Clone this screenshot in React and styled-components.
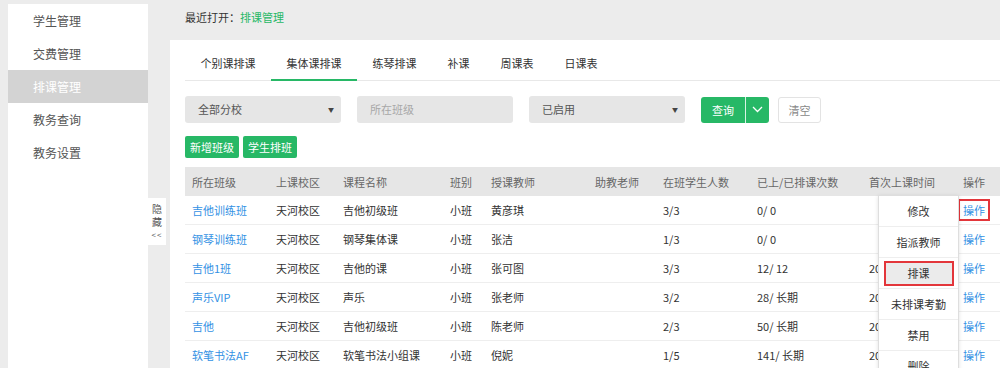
import React from "react";
import { styled, createGlobalStyle } from "styled-components";

const green = "#27b866";
const blue = "#3391e4";

const GlobalStyle = createGlobalStyle`
  html, body {
    margin: 0;
    padding: 0;
    background: #ececec;
    font-family: "Noto Sans CJK SC", "Noto Sans", sans-serif;
  }
`;

const menuItems = ["学生管理", "交费管理", "排课管理", "教务查询", "教务设置"];
const tabs = ["个别课排课", "集体课排课", "练琴排课", "补课", "周课表", "日课表"];
const columns = [
  { title: "所在班级", width: 84 },
  { title: "上课校区", width: 67 },
  { title: "课程名称", width: 107 },
  { title: "班别", width: 41 },
  { title: "授课教师", width: 104 },
  { title: "助教老师", width: 68 },
  { title: "在班学生人数", width: 94 },
  { title: "已上/已排课次数", width: 112 },
  { title: "首次上课时间", width: 94 },
  { title: "操作", width: 59 },
];
const rows = [
  ["吉他训练班", "天河校区", "吉他初级班", "小班", "黄彦琪", "", "3/3", "0/ 0", ""],
  ["钢琴训练班", "天河校区", "钢琴集体课", "小班", "张洁", "", "1/3", "0/ 0", ""],
  ["吉他1班", "天河校区", "吉他的课", "小班", "张可图", "", "3/3", "12/ 12", "2017-03-06"],
  ["声乐VIP", "天河校区", "声乐", "小班", "张老师", "", "3/2", "28/ 长期", "2017-02-20"],
  ["吉他", "天河校区", "吉他初级班", "小班", "陈老师", "", "2/3", "50/ 长期", "2016-11-14"],
  ["软笔书法AF", "天河校区", "软笔书法小组课", "小班", "倪妮", "", "1/5", "141/ 长期", "2016-09-03"],
];
const actions = ["修改", "指派教师", "排课", "未排课考勤", "禁用", "删除"];

const App = () => {
  return (
    <Page>
      <GlobalStyle />
      <Sidebar>
        {menuItems.map((m) => (
          <SideItem key={m} $active={m === "排课管理"}>
            {m}
          </SideItem>
        ))}
      </Sidebar>
      <HideTab>
        <span>隐</span>
        <span>藏</span>
        <span>&lt;&lt;</span>
      </HideTab>
      <Main>
        <Recent>
          最近打开：<RecentLink>排课管理</RecentLink>
        </Recent>
        <Panel>
          <TabBar>
            {tabs.map((t) => (
              <Tab key={t} $active={t === "集体课排课"}>
                {t}
              </Tab>
            ))}
          </TabBar>
          <Filters>
            <SelectBox>
              全部分校<Caret>▼</Caret>
            </SelectBox>
            <SelectBox $placeholder>所在班级</SelectBox>
            <SelectBox>
              已启用<Caret>▼</Caret>
            </SelectBox>
            <QueryGroup>
              <QueryMain>查询</QueryMain>
              <QueryArrow>
                <svg width="11" height="7" viewBox="0 0 11 7">
                  <path d="M1 1l4.5 4.5L10 1" fill="none" stroke="#fff" strokeWidth="1.3" />
                </svg>
              </QueryArrow>
            </QueryGroup>
            <ClearButton>清空</ClearButton>
          </Filters>
          <Actions>
            <GreenButton>新增班级</GreenButton>
            <GreenButton>学生排班</GreenButton>
          </Actions>
          <TableWrap>
            <Table>
              <colgroup>
                {columns.map((c) => (
                  <col key={c.title} style={{ width: c.width }} />
                ))}
              </colgroup>
              <thead>
                <tr>
                  {columns.map((c) => (
                    <Th key={c.title}>{c.title}</Th>
                  ))}
                </tr>
              </thead>
              <tbody>
                {rows.map((r, i) => (
                  <tr key={i}>
                    {r.map((cell, j) => (
                      <Td key={j}>{j === 0 ? <Link>{cell}</Link> : cell}</Td>
                    ))}
                    <Td>
                      <Link $boxed={i === 0}>操作</Link>
                    </Td>
                  </tr>
                ))}
              </tbody>
            </Table>
            <ActionMenu>
              {actions.map((a) => (
                <ActionItem key={a}>
                  <ActionLabel $marked={a === "排课"}>{a}</ActionLabel>
                </ActionItem>
              ))}
            </ActionMenu>
          </TableWrap>
        </Panel>
      </Main>
    </Page>
  );
};

const Page = styled.div`
  display: flex;
  align-items: flex-start;
  width: 1000px;
  height: 368px;
  overflow: hidden;
`;

const Sidebar = styled.div`
  width: 140px;
  height: 364px;
  margin: 4px 0 0 8px;
  background: #fff;
  flex-shrink: 0;
`;

const SideItem = styled.div`
  height: 33px;
  line-height: 33px;
  padding-left: 25px;
  font-size: 12px;
  color: ${(p) => (p.$active ? "#fff" : "#555")};
  background: ${(p) => (p.$active ? "#d3d3d3" : "transparent")};
`;

const HideTab = styled.div`
  width: 18px;
  height: 47px;
  margin-top: 198px;
  background: #fff;
  display: flex;
  flex-direction: column;
  align-items: center;
  padding-top: 4px;
  box-sizing: border-box;
  font-size: 10px;
  line-height: 13px;
  color: #555;
  flex-shrink: 0;
  span:last-child {
    font-size: 8px;
    letter-spacing: 1px;
  }
`;

const Main = styled.div`
  flex: 1;
  margin-left: 4px;
  min-width: 0;
`;

const Recent = styled.div`
  height: 40px;
  line-height: 34px;
  padding-left: 15px;
  font-size: 11px;
  color: #333;
`;

const RecentLink = styled.span`
  color: ${green};
`;

const Panel = styled.div`
  background: #fff;
  padding-left: 15px;
  height: 328px;
  overflow: hidden;
`;

const TabBar = styled.div`
  display: flex;
  padding-top: 5px;
  border-bottom: 1px solid #e8e8e8;
`;

const Tab = styled.div`
  height: 36px;
  line-height: 36px;
  padding: 0 15.5px;
  font-size: 11px;
  color: #333;
  box-sizing: border-box;
  border-bottom: 2px solid ${(p) => (p.$active ? green : "transparent")};
  margin-bottom: -1px;
`;

const Filters = styled.div`
  display: flex;
  align-items: center;
  margin-top: 15px;
  height: 27px;
`;

const SelectBox = styled.div`
  position: relative;
  width: 156px;
  height: 27px;
  line-height: 27px;
  margin-right: 16px;
  padding-left: 13px;
  box-sizing: border-box;
  border-radius: 3px;
  background: #e6e6e6;
  font-size: 11px;
  color: ${(p) => (p.$placeholder ? "#a8a8a8" : "#555")};
`;

const Caret = styled.span`
  position: absolute;
  right: 7px;
  top: 0;
  font-size: 6px;
  color: #444;
`;

const QueryGroup = styled.div`
  display: flex;
  height: 26px;
  border-radius: 3px;
  overflow: hidden;
  background: ${green};
`;

const QueryMain = styled.div`
  width: 44px;
  line-height: 26px;
  text-align: center;
  font-size: 11px;
  color: #fff;
  border-right: 1px solid #d9f3e4;
`;

const QueryArrow = styled.div`
  width: 23px;
  display: flex;
  align-items: center;
  justify-content: center;
`;

const ClearButton = styled.div`
  width: 43px;
  height: 26px;
  margin-left: 9px;
  box-sizing: border-box;
  border: 1px solid #e3e3e3;
  border-radius: 3px;
  line-height: 24px;
  text-align: center;
  font-size: 11px;
  color: #888;
`;

const Actions = styled.div`
  display: flex;
  gap: 4px;
  margin-top: 13px;
`;

const GreenButton = styled.div`
  width: 54px;
  height: 22px;
  line-height: 22px;
  border-radius: 2px;
  text-align: center;
  font-size: 11px;
  color: #fff;
  background: ${green};
`;

const TableWrap = styled.div`
  position: relative;
  margin-top: 9px;
`;

const Table = styled.table`
  width: 830px;
  border-collapse: collapse;
  table-layout: fixed;
`;

const Th = styled.th`
  height: 29px;
  padding: 0 0 0 7px;
  text-align: left;
  font-weight: normal;
  font-size: 11px;
  color: #666;
  background: #e6e6e6;
  white-space: nowrap;
`;

const Td = styled.td`
  height: 28px;
  padding: 0 0 0 7px;
  border-bottom: 1px solid #eeeeee;
  font-size: 11px;
  color: #333;
  white-space: nowrap;
  overflow: hidden;
`;

const Link = styled.span`
  color: ${blue};
  ${(p) =>
    p.$boxed &&
    `
    border: 2px solid #e3363b;
    padding: 1px 3px;
    margin-left: -5px;
  `}
`;

const ActionMenu = styled.div`
  position: absolute;
  left: 693px;
  top: 28px;
  width: 79px;
  background: #fff;
  border: 1px solid #dedede;
  box-shadow: 0 1px 4px rgba(0, 0, 0, 0.12);
`;

const ActionItem = styled.div`
  height: 31px;
  display: flex;
  align-items: center;
  justify-content: center;
  border-bottom: 1px solid #eeeeee;
  box-sizing: border-box;
`;

const ActionLabel = styled.span`
  font-size: 11px;
  color: #333;
  ${(p) =>
    p.$marked &&
    `
    width: 70px;
    height: 25px;
    line-height: 21px;
    box-sizing: border-box;
    text-align: center;
    background: #ebebeb;
    border: 2px solid #e3363b;
  `}
`;

export default App;
